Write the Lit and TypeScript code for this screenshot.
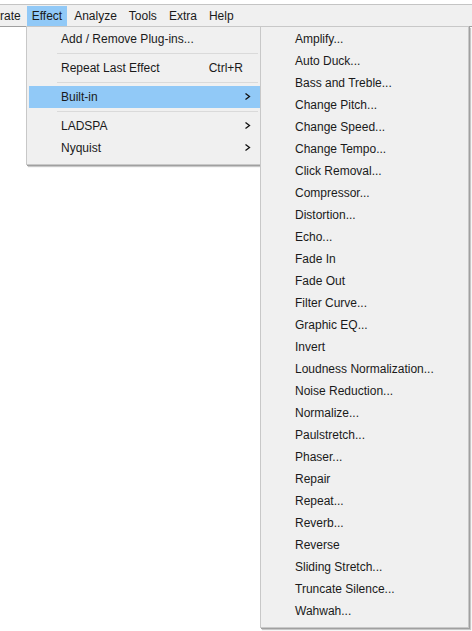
import { LitElement, html, css, nothing } from "lit";
import { customElement, property } from "lit/decorators.js";

interface Item {
  label: string;
  shortcut?: string;
  submenu?: boolean;
  active?: boolean;
}

const EFFECT_GROUPS: Item[][] = [
  [{ label: "Add / Remove Plug-ins..." }],
  [{ label: "Repeat Last Effect", shortcut: "Ctrl+R" }],
  [{ label: "Built-in", submenu: true, active: true }],
  [
    { label: "LADSPA", submenu: true },
    { label: "Nyquist", submenu: true },
  ],
];

const BUILT_IN: Item[][] = [
  [
    "Amplify...", "Auto Duck...", "Bass and Treble...", "Change Pitch...",
    "Change Speed...", "Change Tempo...", "Click Removal...", "Compressor...",
    "Distortion...", "Echo...", "Fade In", "Fade Out", "Filter Curve...",
    "Graphic EQ...", "Invert", "Loudness Normalization...",
    "Noise Reduction...", "Normalize...", "Paulstretch...", "Phaser...",
    "Repair", "Repeat...", "Reverb...", "Reverse", "Sliding Stretch...",
    "Truncate Silence...", "Wahwah...",
  ].map((label) => ({ label })),
];

@customElement("popup-menu")
export class PopupMenu extends LitElement {
  @property({ attribute: false }) groups: Item[][] = [];

  static styles = css`
    :host {
      display: block;
      box-sizing: border-box;
      background: #f0f0f0;
      border: 1px solid #c8c8c8;
      padding: 1px 0 5px 2px;
      box-shadow: 1px 1px 0 #a0a0a0, 2px 2px 1px #c8c8c8;
    }
    .item {
      display: flex;
      align-items: center;
      box-sizing: border-box;
      width: 100%;
      height: 22px;
      margin: 0;
      padding: 0 9px 0 32px;
      border: 0;
      background: none;
      color: #1a1a1a;
      font: inherit;
      text-align: left;
      white-space: nowrap;
    }
    .active {
      background: #91c9f7;
    }
    .label {
      flex: 1;
    }
    .shortcut {
      margin-right: 9px;
    }
    .separator {
      height: 1px;
      margin: 3px 3px 3px 28px;
      border: 0;
      background: #dadada;
    }
    .arrow {
      width: 8px;
      height: 8px;
      fill: none;
      stroke: #111111;
      stroke-width: 1.3;
    }
  `;

  render() {
    return this.groups.map(
      (group, index) => html`
        ${index ? html`<hr class="separator" />` : nothing}
        ${group.map(
          (item) => html`<button
            class="item ${item.active ? "active" : ""}"
            role="menuitem"
          >
            <span class="label">${item.label}</span>
            ${item.shortcut
              ? html`<span class="shortcut">${item.shortcut}</span>`
              : nothing}
            ${item.submenu
              ? html`<svg class="arrow" viewBox="0 0 8 8" aria-hidden="true">
                  <path d="M1.5 0.5 L5.5 3.5 L1.5 6.5" />
                </svg>`
              : nothing}
          </button>`
        )}
      `
    );
  }
}

@customElement("app-root")
export class AppRoot extends LitElement {
  static styles = css`
    :host {
      display: block;
      min-height: 100vh;
      padding-top: 4px;
      box-sizing: border-box;
      background: #ffffff;
      color: #1a1a1a;
      font: 12px/16px "Liberation Sans", Arial, sans-serif;
      overflow: hidden;
    }
    .bar {
      display: flex;
      gap: 2px;
      height: 20px;
      padding-top: 1px;
      background: #f0f0f0;
      border-top: 1px solid #c4c4c4;
      border-bottom: 1px solid #a0a0a0;
    }
    .menu {
      flex: none;
      margin: 0;
      padding: 0 5px;
      border: 0;
      background: none;
      color: inherit;
      font: inherit;
    }
    .first {
      padding: 0 4px 0 0;
    }
    .open {
      background: #91c9f7;
    }
    .popups {
      display: flex;
      align-items: flex-start;
      margin: -1px 3px 0 26px;
    }
    .effects {
      flex: none;
      width: 235px;
      border-right: 0;
    }
    .builtin {
      flex: 1;
      margin-left: -1px;
    }
  `;

  render() {
    return html`
      <nav class="bar" role="menubar">
        <button class="menu first" role="menuitem">rate</button>
        <button class="menu open" role="menuitem">Effect</button>
        ${["Analyze", "Tools", "Extra", "Help"].map(
          (name) => html`<button class="menu" role="menuitem">${name}</button>`
        )}
      </nav>
      <div class="popups">
        <popup-menu class="effects" role="menu" .groups=${EFFECT_GROUPS}></popup-menu>
        <popup-menu class="builtin" role="menu" .groups=${BUILT_IN}></popup-menu>
      </div>
    `;
  }
}
